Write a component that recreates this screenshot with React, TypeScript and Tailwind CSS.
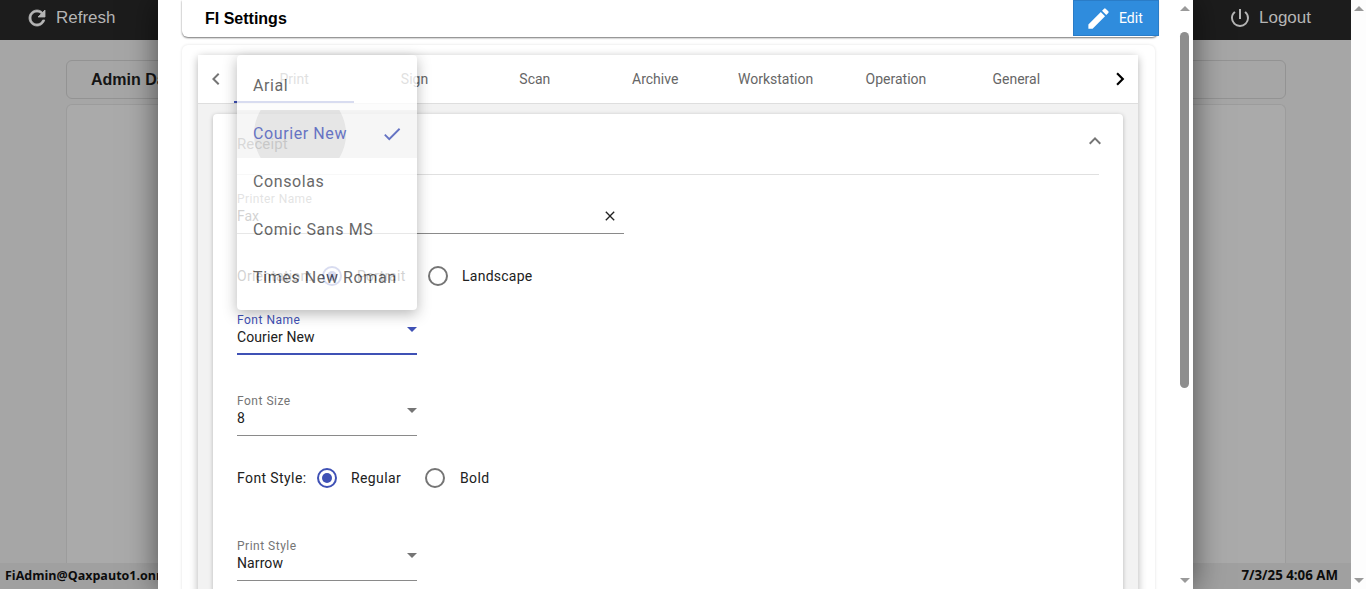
import { MdPowerSettingsNew, MdEdit, MdChevronLeft, MdChevronRight, MdExpandLess, MdClose, MdCheck } from "react-icons/md";

const tabs = ["Print", "Sign", "Scan", "Archive", "Workstation", "Operation", "General"];
const fonts = ["Arial", "Courier New", "Consolas", "Comic Sans MS", "Times New Roman"];

function Radio({ checked }: { checked?: boolean }) {
  return (
    <span className={`flex h-5 w-5 items-center justify-center rounded-full border-2 ${checked ? "border-[#3f51b5]" : "border-[#757575]"}`}>
      {checked && <span className="h-2.5 w-2.5 rounded-full bg-[#3f51b5]" />}
    </span>
  );
}

function SelectField({ label, value, focused }: { label: string; value: string; focused?: boolean }) {
  return (
    <div className={`relative w-[180px] ${focused ? "h-[43px] border-b-2 border-[#3f51b5]" : "h-[43px] border-b border-[#8a8a8a]"}`}>
      <div className={`h-4 text-[12px] leading-4 tracking-[0.5px] ${focused ? "text-[#3f51b5]" : "text-[#757575]"}`}>{label}</div>
      <div className="h-[18px] text-[14px] leading-[18px] tracking-[0.1px] text-[#212121]">{value}</div>
      <span className={`absolute right-0 top-[15px] h-0 w-0 border-x-[5px] border-t-[5px] border-x-transparent ${focused ? "border-t-[#3f51b5]" : "border-t-[#757575]"}`} />
    </div>
  );
}

function ScrollArrow({ up }: { up?: boolean }) {
  return (
    <span className={`h-0 w-0 border-x-[5px] border-x-transparent ${up ? "border-b-[5px] border-b-[#9a9a9a]" : "border-t-[5px] border-t-[#9a9a9a]"}`} />
  );
}

export default function App() {
  return (
    <div className="relative flex h-[589px] w-[1366px] overflow-hidden bg-[#fdfdfd] font-['Roboto',sans-serif]">
      {/* page behind the dialog */}
      <div className="flex w-[1351px] flex-col bg-[#a6a6a6]">
        <header className="flex h-10 items-center justify-between bg-[#1c1c1c] pb-[5px] pl-[25px] pr-[40px] text-[#b5b5b5]">
          <div className="flex items-center gap-[7px] font-['Liberation_Sans',sans-serif] text-[17px] leading-5">
            <svg width="24" height="24" viewBox="0 0 24 24" fill="currentColor" stroke="currentColor" strokeWidth="0.8">
              <path d="M17.65 6.35C16.2 4.9 14.21 4 12 4c-4.42 0-7.99 3.58-7.99 8s3.57 8 7.99 8c3.73 0 6.84-2.55 7.73-6h-2.08c-.82 2.33-3.04 4-5.65 4-3.31 0-6-2.69-6-6s2.69-6 6-6c1.66 0 3.14.69 4.22 1.78L13 11h7V4l-2.35 2.35z" />
            </svg>
            Refresh
          </div>
          <div className="flex items-center gap-[7px] font-['Liberation_Sans',sans-serif] text-[17px] leading-5">
            <MdPowerSettingsNew size={24} />
            Logout
          </div>
        </header>
        <div className="flex flex-1 flex-col pl-[66px] pr-[65px] pt-5">
          <div className="flex h-[39px] items-center rounded-md border border-[#939393] pl-6 font-['Liberation_Sans',sans-serif] text-[16px] font-bold text-[#151515]">
            Admin Dashboard
          </div>
          <div className="mt-[5px] flex-1 rounded-t-md border-x border-t border-[#9c9c9c] bg-[#aaaaaa]" />
        </div>
        <footer className="flex h-[26px] items-center justify-between bg-[#a0a0a0] pl-[5px] pr-[13px] font-['Open_Sans',sans-serif] font-bold text-[#0c0c0c]">
          <span className="text-[12.5px]">FiAdmin@Qaxpauto1.onmicrosoft.com</span>
          <span className="text-[13.3px]">7/3/25 4:06 AM</span>
        </footer>
      </div>
      <div className="flex w-[15px] flex-col items-center justify-between py-[6px]">
        <ScrollArrow up />
        <ScrollArrow />
      </div>

      {/* settings dialog */}
      <div className="absolute bottom-0 left-[158px] top-0 flex w-[1035px] bg-white shadow-[0_0_30px_rgba(0,0,0,0.55)]">
        <div className="w-[1018px] overflow-hidden pl-6 pr-[18px]">
          <div className="flex h-[37px] w-[976px] items-center justify-between rounded-b-md shadow-[0_1px_2px_rgba(0,0,0,0.55)]">
            <span className="pl-[23px] font-['Liberation_Sans',sans-serif] text-[16px] font-bold text-black">FI Settings</span>
            <button className="-mr-px flex h-9 w-[86px] items-center gap-[7px] self-start border border-[#2a7cc7] bg-[#2f8cdd] pl-[11px] text-[14px] text-white">
              <MdEdit size={27} />
              Edit
            </button>
          </div>
          <div className="mt-2 h-[600px] w-[973px] rounded-md px-4 pt-[10px] shadow-[0_0_3px_rgba(0,0,0,0.12)]">
            <div className="h-[600px] w-[940px] rounded-t-sm bg-[#f2f2f2] shadow-[0_2px_8px_rgba(0,0,0,0.3)]">
              <div className="flex h-[49px] items-center border-b border-[#dedede] bg-white">
                <span className="flex w-9 justify-center text-[#757575]"><MdChevronLeft size={24} /></span>
                <div className="relative flex h-full flex-1">
                  {tabs.map((t) => (
                    <span key={t} className="-ml-[0.15px] flex w-[120.5px] items-center justify-center text-[14px] text-[#666666]">{t}</span>
                  ))}
                  <span className="absolute bottom-0 left-0 h-0.5 w-[120px] bg-[#3f51b5]" />
                </div>
                <span className="flex w-9 justify-center text-black"><MdChevronRight size={26} /></span>
              </div>
              <div className="mx-[15px] mt-[10px] h-[500px] rounded-t-sm bg-white pl-6 pr-6 shadow-[0_1px_4px_rgba(0,0,0,0.25)]">
                <div className="flex h-[61px] items-center justify-between border-b border-[#e0e0e0] text-[#666666]">
                  <span className="text-[15px] tracking-[0.1px]">Receipt</span>
                  <span className="-mr-2 -mt-1.5 text-[#757575]"><MdExpandLess size={24} /></span>
                </div>
                <div className="relative mt-4 h-[43px] w-[387px] border-b border-[#8a8a8a]">
                  <div className="h-4 text-[12px] leading-4 tracking-[0.4px] text-[#757575]">Printer Name</div>
                  <div className="h-[18px] text-[14px] leading-[18px] text-[#212121]">Fax</div>
                  <MdClose size={16} className="absolute right-[6px] top-[17px] text-[#222222]" />
                </div>
                <div className="mt-[22px] flex h-10 items-center text-[14px] tracking-[0.25px] text-[#212121]">
                  <span className="w-[85px]">Orientation:</span>
                  <Radio checked />
                  <span className="ml-[15px] w-[71px]">Portrait</span>
                  <Radio />
                  <span className="ml-[14px]">Landscape</span>
                </div>
                <div className="mt-4"><SelectField label="Font Name" value="Courier New" focused /></div>
                <div className="mt-[38px]"><SelectField label="Font Size" value="8" /></div>
                <div className="mt-[22px] flex h-10 items-center text-[14px] tracking-[0.4px] text-[#212121]">
                  <span className="w-[80px]">Font Style:</span>
                  <Radio checked />
                  <span className="ml-[14px] w-[74px]">Regular</span>
                  <Radio />
                  <span className="ml-[15px]">Bold</span>
                </div>
                <div className="mt-10"><SelectField label="Print Style" value="Narrow" /></div>
              </div>
            </div>
          </div>
        </div>
        <div className="relative flex w-[17px] flex-col items-center justify-between py-[6px]">
          <ScrollArrow up />
          <span className="absolute left-[4px] top-8 h-[356px] w-[9px] rounded-full bg-[#8e8e8e]" />
          <ScrollArrow />
        </div>
      </div>

      {/* open font menu, still fading in */}
      <div className="absolute left-[237px] top-[55px] h-[255px] w-[180px] rounded-sm bg-white pt-[7px] opacity-80 shadow-[0_4px_14px_rgba(0,0,0,0.35)]">
        {fonts.map((f) => (
          <div key={f} className={`relative flex h-12 items-center justify-between overflow-hidden pl-4 pr-[14px] text-[16px] tracking-[0.6px] ${f === "Courier New" ? "bg-[#f5f5f5] text-[#3f51b5]" : "text-[#444444]"}`}>
            {f === "Courier New" && <span className="absolute left-[17px] top-[-22px] h-[92px] w-[92px] rounded-full bg-[#e0e0e0]" />}
            <span className="relative whitespace-nowrap">{f}</span>
            {f === "Courier New" && <MdCheck size={22} className="relative" />}
          </div>
        ))}
      </div>
    </div>
  );
}
